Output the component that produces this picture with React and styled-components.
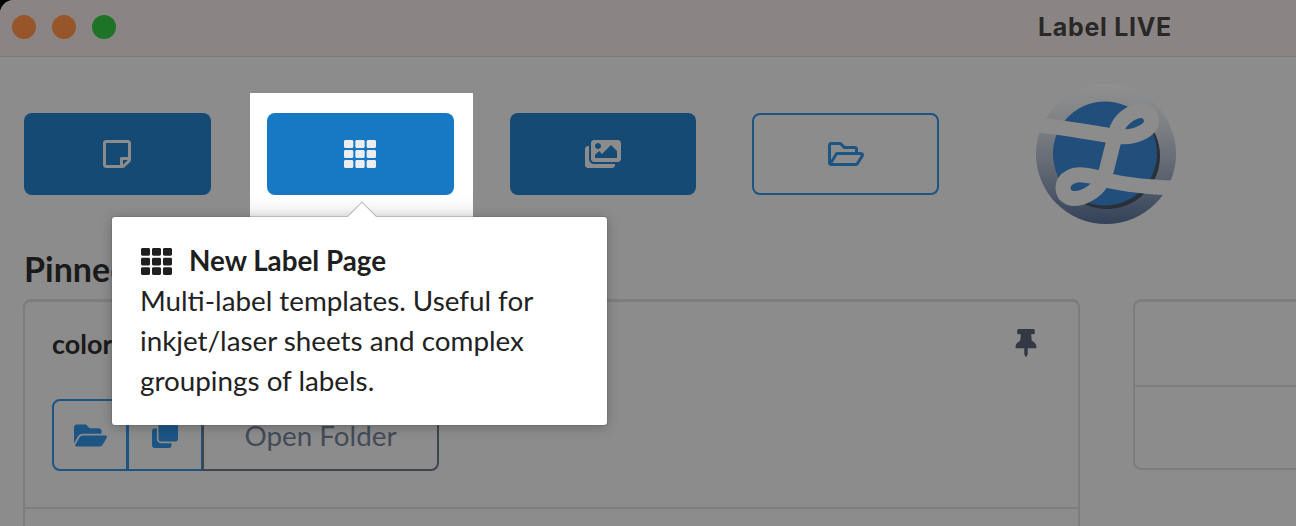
import React from "react";
import styled, { createGlobalStyle } from "styled-components";
import {
  FaRegStickyNote,
  FaTh,
  FaImages,
  FaRegFolderOpen,
  FaFolderOpen,
  FaClone,
  FaThumbtack,
} from "react-icons/fa";

const GlobalStyle = createGlobalStyle`
  html, body {
    margin: 0;
    padding: 0;
    background: #000;
  }
  * {
    box-sizing: border-box;
  }
`;

const Logo = () => (
  <LogoSvg viewBox="0 0 140 140">
    <defs>
      <linearGradient id="ring" x1="0" y1="0" x2="0" y2="1">
        <stop offset="0" stopColor="#909090" />
        <stop offset="0.3" stopColor="#7d7f83" />
        <stop offset="0.6" stopColor="#626973" />
        <stop offset="1" stopColor="#33425a" />
      </linearGradient>
    </defs>
    <circle cx="70" cy="70" r="70" fill="url(#ring)" />
    <circle cx="71" cy="72" r="53" fill="#2a2f38" />
    <circle cx="69" cy="69.5" r="52" fill="#214e7b" />
    <path
      d="M0 41 C 26 43 50 48 71 51 C 80 52 88 54 96 52 C 108 49 118 43 115 34 C 112 25 103 25 96 29 C 85 35 81 42 79 52 L 71 84 C 68 98 60 108 47 113 C 36 117 27 113 27 104 C 27 94 38 90 47 91 C 58 92 66 95 74 97 C 92 101 112 103 138 104"
      fill="none"
      stroke="#8c8c8c"
      strokeWidth="15"
    />
  </LogoSvg>
);

export default function App() {
  return (
    <Page>
      <GlobalStyle />
      <TitleBar>
        <Dots>
          <Dot $color="#96562a" />
          <Dot $color="#96562a" />
          <Dot $color="#1d7427" />
        </Dots>
        <WindowTitle>Label LIVE</WindowTitle>
      </TitleBar>

      <Toolbar>
        <ToolButton $bg="#144a73" $fg="#8c8c8c">
          <FaRegStickyNote size={32} />
        </ToolButton>
        <ToolButton $bg="#1778c4" $fg="#ecedf0" $spot>
          <FaTh size={32} />
        </ToolButton>
        <ToolButton $bg="#144a73" $fg="#8c8c8c">
          <FaImages size={36} />
        </ToolButton>
        <ToolButton $bg="transparent" $fg="#1c5484" $outlined>
          <FaRegFolderOpen size={36} />
        </ToolButton>
        <Logo />
      </Toolbar>

      <Heading>Pinned</Heading>

      <Cards>
        <MainCard>
          <CardHead>
            <CardTitle>colors</CardTitle>
            <PinIcon>
              <FaThumbtack size={28} />
            </PinIcon>
          </CardHead>
          <ButtonGroup>
            <GroupIcon>
              <FaFolderOpen size={33} />
            </GroupIcon>
            <GroupIcon>
              <FaClone size={26} />
            </GroupIcon>
            <GroupLabel>Open Folder</GroupLabel>
          </ButtonGroup>
        </MainCard>
        <SideCard>
          <SideRow />
          <SideRow />
        </SideCard>
      </Cards>

      <Popover>
        <PopoverTitle>
          <FaTh size={31} />
          New Label Page
        </PopoverTitle>
        <PopoverBody>
          Multi-label templates. Useful for inkjet/laser sheets and complex
          groupings of labels.
        </PopoverBody>
      </Popover>
    </Page>
  );
}

const Page = styled.div`
  position: relative;
  width: 1296px;
  height: 526px;
  overflow: hidden;
  background: #8c8c8c;
  border-top-left-radius: 14px;
  font-family: "Lato", "Liberation Sans", sans-serif;
`;

const TitleBar = styled.div`
  display: flex;
  align-items: center;
  justify-content: space-between;
  height: 57px;
  padding: 0 124px 2px 12px;
  background: #8a8584;
  border-bottom: 1px solid #7d7a7c;
`;

const Dots = styled.div`
  display: flex;
  gap: 16px;
`;

const Dot = styled.span`
  width: 24px;
  height: 24px;
  border-radius: 50%;
  background: ${(p) => p.$color};
`;

const WindowTitle = styled.div`
  font-family: "Inter", sans-serif;
  font-size: 25px;
  font-weight: 700;
  letter-spacing: 0.7px;
  color: #2a2727;
`;

const Toolbar = styled.div`
  display: flex;
  align-items: center;
  gap: 56px;
  height: 82px;
  margin-top: 56px;
  padding-left: 24px;
`;

const ToolButton = styled.div`
  position: relative;
  flex: none;
  display: flex;
  align-items: center;
  justify-content: center;
  width: 186.8px;
  height: 82px;
  border-radius: 8px;
  background: ${(p) => p.$bg};
  color: ${(p) => p.$fg};
  border: ${(p) => (p.$outlined ? "2px solid #1c5484" : "none")};

  ${(p) =>
    p.$spot &&
    `
    z-index: 0;
    &::before {
      content: "";
      position: absolute;
      z-index: -2;
      inset: -20px -19px -22px -17px;
      background: linear-gradient(#fff 0, #fff 84%, #eeeef0 100%);
    }
    &::after {
      content: "";
      position: absolute;
      z-index: -1;
      inset: 0;
      border-radius: 8px;
      background: #1778c4;
    }
    svg { position: relative; }
  `}
`;

const LogoSvg = styled.svg`
  flex: none;
  width: 140px;
  height: 140px;
  margin-left: 41px;
`;

const Heading = styled.h2`
  margin: 51px 0 1px 24px;
  font-size: 34px;
  line-height: 46px;
  font-weight: 700;
  color: #1a1a1a;
`;

const Cards = styled.div`
  display: flex;
  align-items: flex-start;
  gap: 53px;
  margin: 7px 0 0 23px;
`;

const MainCard = styled.div`
  flex: none;
  width: 1057px;
  height: 260px;
  padding: 22px 27px 0;
  border: 2px solid #7d7d7d;
  border-top-width: 3px;
  border-radius: 8px 8px 0 0;
  background: linear-gradient(#8c8c8c 0, #8c8c8c 205px, #7d7d7d 205px, #7d7d7d 207px, #8c8c8c 207px);
`;

const CardHead = styled.div`
  display: flex;
  align-items: center;
  justify-content: space-between;
`;

const CardTitle = styled.div`
  font-size: 27px;
  line-height: 40px;
  font-weight: 700;
  color: #1a1a1a;
`;

const PinIcon = styled.span`
  display: flex;
  margin-right: 11px;
  margin-top: -3px;
  color: #333845;
`;

const ButtonGroup = styled.div`
  display: flex;
  width: 387px;
  height: 72px;
  margin-top: 35px;
`;

const GroupIcon = styled.div`
  display: flex;
  align-items: center;
  justify-content: center;
  width: 76px;
  margin-right: -1px;
  color: #1c5484;
  border: 2px solid #1c5484;

  &:first-child {
    border-radius: 8px 0 0 8px;
  }
`;

const GroupLabel = styled.div`
  flex: 1;
  display: flex;
  align-items: center;
  justify-content: center;
  font-size: 27.8px;
  color: #444b58;
  border: 2px solid #40444f;
  border-radius: 0 8px 8px 0;
`;

const SideCard = styled.div`
  flex: none;
  width: 300px;
  height: 171px;
  border: 2px solid #7d7d7d;
  border-top-width: 3px;
  border-radius: 8px;
`;

const SideRow = styled.div`
  height: 83px;

  & + & {
    border-top: 2px solid #7d7d7d;
  }
`;

const Popover = styled.div`
  position: absolute;
  left: 112px;
  top: 217px;
  width: 495px;
  height: 208px;
  padding: 25px 28px;
  background: #fff;
  border-radius: 3px;
  box-shadow: 0 0 0 1px rgba(90, 90, 90, 0.25), 0 2px 12px rgba(0, 0, 0, 0.25);

  &::before {
    content: "";
    position: absolute;
    left: 240px;
    top: -10px;
    width: 20px;
    height: 20px;
    background: #fff;
    transform: rotate(45deg);
    box-shadow: -1px -1px 0 #b5b5b5;
  }

  svg {
    margin-left: 1px;
  }
`;

const PopoverTitle = styled.div`
  position: relative;
  display: flex;
  align-items: center;
  gap: 17px;
  margin-bottom: 1px;
  font-size: 27.8px;
  line-height: 38px;
  font-weight: 700;
  color: #1f1f1f;
`;

const PopoverBody = styled.div`
  font-size: 27.8px;
  line-height: 40px;
  color: #222;
`;
